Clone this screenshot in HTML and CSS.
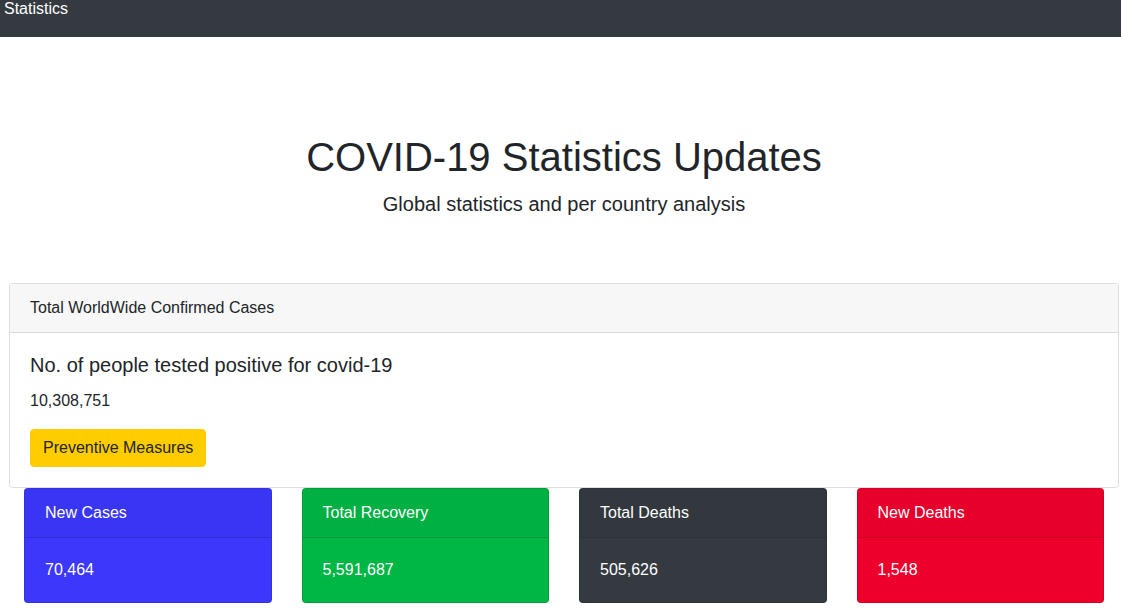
FILE: index.html
```html
<!DOCTYPE html>
<html>
<head>
<meta charset="utf-8">
<title>Statistics</title>
<link rel="stylesheet" href="styles.css">
</head>
<body>
<nav class="navbar"><span class="brand">Statistics</span></nav>
<main class="wrap">
  <header class="jumbo">
    <h1 class="jumbo-title">COVID-19 Statistics Updates</h1>
    <p class="lead">Global statistics and per country analysis</p>
  </header>
  <section class="card main-card">
    <div class="card-header">Total WorldWide Confirmed Cases</div>
    <div class="card-body">
      <h5 class="card-title">No. of people tested positive for covid-19</h5>
      <p class="card-text">10,308,751</p>
      <button class="btn-warn">Preventive Measures</button>
    </div>
  </section>
  <div class="row">
    <div class="col"><div class="stat blue"><div class="stat-head">New Cases</div><div class="stat-body">70,464</div></div></div>
    <div class="col"><div class="stat green"><div class="stat-head">Total Recovery</div><div class="stat-body">5,591,687</div></div></div>
    <div class="col"><div class="stat dark"><div class="stat-head">Total Deaths</div><div class="stat-body">505,626</div></div></div>
    <div class="col"><div class="stat red"><div class="stat-head">New Deaths</div><div class="stat-body">1,548</div></div></div>
  </div>
</main>
</body>
</html>
```

FILE: styles.css
```css
* { box-sizing: border-box; }
body {
  margin: 0;
  font-family: "Liberation Sans", Arial, sans-serif;
  font-size: 16px;
  line-height: 1.5;
  color: #212529;
  background: #fff;
}
.navbar {
  height: 37px;
  background: #343a40;
  padding: 0 4px;
}
.brand {
  color: #fff;
  font-size: 16px;
  line-height: 17px;
  display: block;
}
.jumbo {
  padding: 96px 0 64px;
  text-align: center;
}
.jumbo-title {
  margin: 0 0 8px;
  font-size: 40px;
  font-weight: 400;
  line-height: 1.2;
}
.lead {
  margin: 0;
  font-size: 20px;
  line-height: 30px;
}
.wrap {
  padding: 0 2px 0 9px;
}
.card {
  border: 1px solid rgba(0,0,0,.125);
  border-radius: 4px;
  background: #fff;
}
.card-header {
  padding: 12px 20px;
  background: #f7f7f7;
  border-bottom: 1px solid rgba(0,0,0,.125);
  line-height: 24px;
}
.card-body {
  padding: 20px;
}
.card-title {
  margin: 0 0 12px;
  font-size: 20px;
  font-weight: 400;
  line-height: 1.2;
}
.card-text {
  margin: 0 0 16px;
}
.btn-warn {
  font-family: inherit;
  font-size: 16px;
  line-height: 24px;
  padding: 6px 12px;
  border: 1px solid #ffcc00;
  background: #ffcc00;
  color: #212529;
  border-radius: 4px;
  display: block;
}
.row {
  display: flex;
}
.col {
  flex: 1 1 0;
  padding: 0 15px;
}
.stat {
  border-radius: 4px;
  color: #fff;
  border: 1px solid rgba(0,0,0,.125);
}
.stat-head {
  padding: 12px 20px;
  line-height: 24px;
  border-bottom: 1px solid rgba(0,0,0,.125);
  background: rgba(0,0,0,.03);
}
.stat-body {
  padding: 20px;
  line-height: 24px;
}
.blue { background: #3b38fb; }
.green { background: #00b645; }
.dark { background: #343a40; }
.red { background: #ee002d; }
```
